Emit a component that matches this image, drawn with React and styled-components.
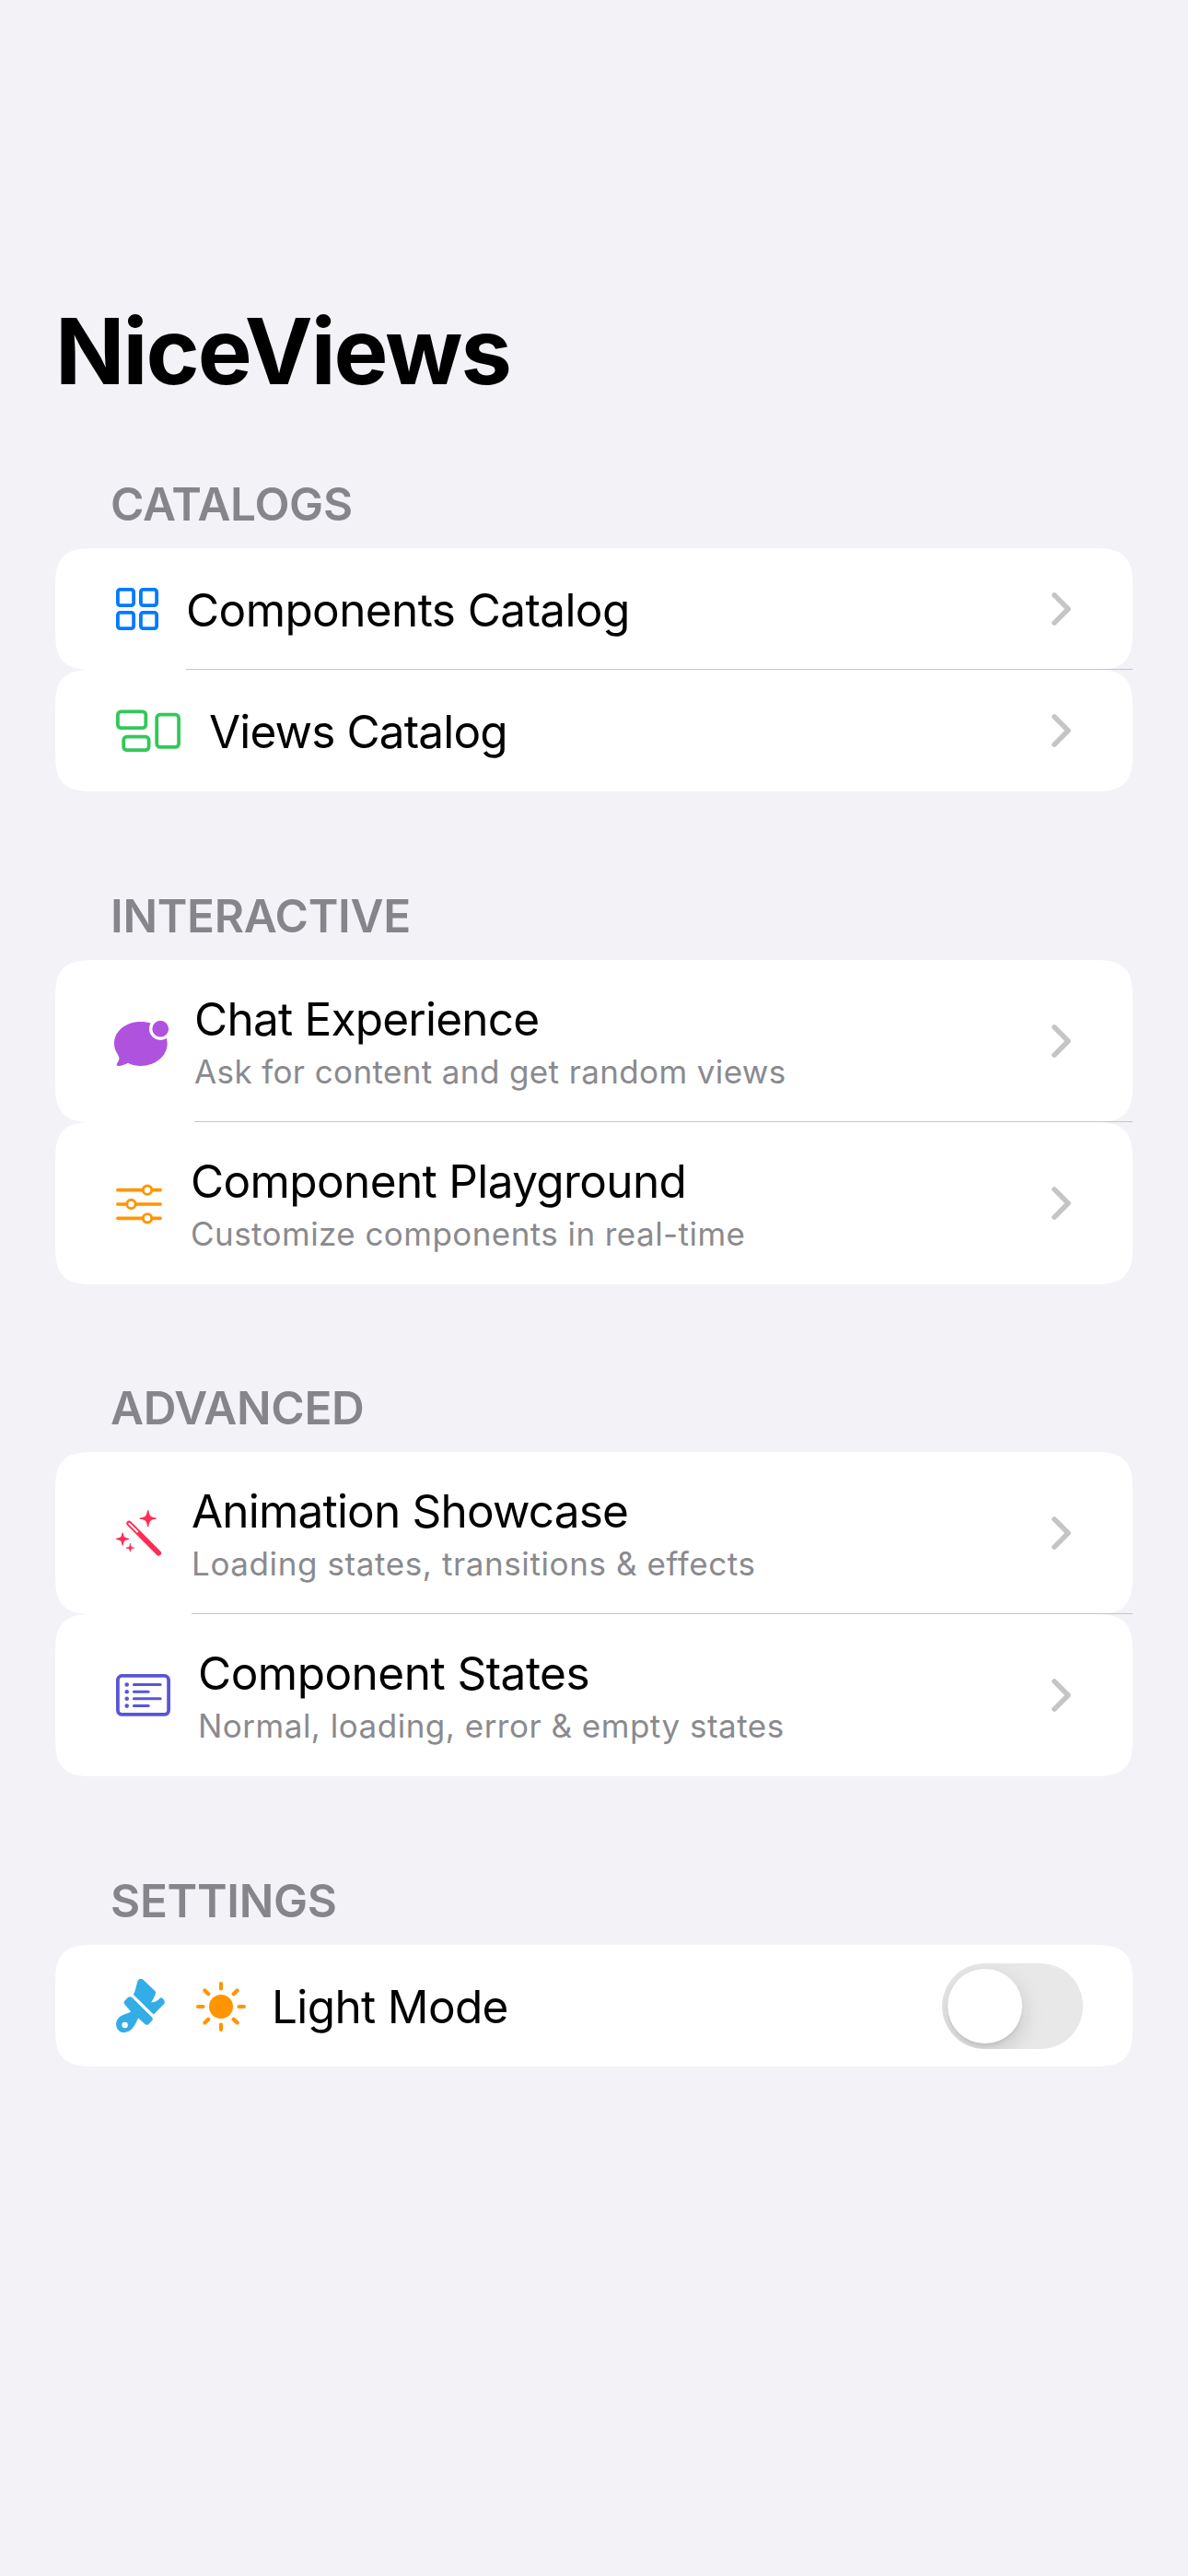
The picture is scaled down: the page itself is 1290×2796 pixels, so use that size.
import React from "react";
import styled, { createGlobalStyle } from "styled-components";

const Global = createGlobalStyle`
  * { box-sizing: border-box; }
  body { margin: 0; background: #f2f2f7; font-family: Inter, "Liberation Sans", sans-serif; }
`;

const Page = styled.main`
  display: flex;
  flex-direction: column;
  width: 1290px;
  min-height: 2796px;
  padding: 322px 60px 0;
  background: #f2f2f7;
`;

const Title = styled.h1`
  margin: 0;
  height: 192px;
  font-size: 99px;
  line-height: 118px;
  font-weight: 700;
  letter-spacing: -1.95px;
  color: #000;
`;

const Section = styled.section`
  display: flex;
  flex-direction: column;
  margin-bottom: ${(p) => p.$after}px;
`;

const Heading = styled.h2`
  margin: 0;
  height: 81px;
  padding: 3px 60px 0;
  font-size: 49.5px;
  line-height: 60px;
  font-weight: 600;
  letter-spacing: -0.3px;
  color: #86858b;
`;

const Row = styled.div`
  position: relative;
  display: flex;
  align-items: center;
  height: ${(p) => p.$height}px;
  padding: 0 54px 0 60px;
  background: #fff;
  border-radius: 32px;
  @supports (corner-shape: superellipse(1.7)) {
    border-radius: 46px;
    corner-shape: superellipse(1.7);
  }
`;

const Divider = styled.div`
  position: absolute;
  left: ${(p) => p.$left}px;
  right: 0;
  bottom: 0;
  height: 1px;
  background: #c5c5c7;
`;

const IconSlot = styled.div`
  flex: none;
  display: flex;
  width: ${(p) => p.$width}px;
  padding-top: ${(p) => p.$drop ?? 0}px;
`;

const Labels = styled.div`
  flex: 1;
  display: flex;
  flex-direction: column;
  padding-top: 2px;
`;

const Label = styled.span`
  font-size: 49.5px;
  line-height: 62px;
  letter-spacing: ${(p) => p.$track}px;
  color: #000;
  white-space: nowrap;
`;

const Detail = styled.span`
  margin-top: 2px;
  font-size: 35px;
  line-height: 48px;
  letter-spacing: ${(p) => p.$track}px;
  color: #8a8a8e;
  white-space: nowrap;
`;

const ChevronBox = styled.div`
  display: flex;
  padding-right: 12px;
`;

const Switch = styled.div`
  display: flex;
  align-items: center;
  width: 153px;
  height: 93px;
  padding: 6px;
  border-radius: 47px;
  background: #e8e8e8;
  overflow: hidden;
`;

const Knob = styled.div`
  width: 81px;
  height: 81px;
  border-radius: 50%;
  background: #fff;
  box-shadow: 0 9px 24px rgba(0, 0, 0, 0.15), 0 3px 3px rgba(0, 0, 0, 0.06);
`;

const Glyph = styled.svg`
  display: block;
  flex: none;
  overflow: visible;
`;

const Chevron = () => (
  <ChevronBox>
    <Glyph width="22" height="36" viewBox="0 0 22 36" fill="none" stroke="#c5c5c7" strokeWidth="5.6" strokeLinecap="round" strokeLinejoin="round">
      <path d="M2.9 2.9 17.9 18 2.9 33.1" />
    </Glyph>
  </ChevronBox>
);

const GridIcon = () => (
  <Glyph width="60" height="46" viewBox="-6 0 60 46" fill="none" stroke="#007aff" strokeWidth="3.8">
    <rect x="1.9" y="1.9" width="17.2" height="17.2" rx="2.6" />
    <rect x="26.9" y="1.9" width="17.2" height="17.2" rx="2.6" />
    <rect x="1.9" y="26.9" width="17.2" height="17.2" rx="2.6" />
    <rect x="26.9" y="26.9" width="17.2" height="17.2" rx="2.6" />
  </Glyph>
);

const GroupIcon = () => (
  <Glyph width="80" height="46" viewBox="-6 0 80 46" fill="none" stroke="#34c759" strokeWidth="3.8">
    <rect x="1.9" y="2.4" width="30.4" height="17.7" rx="3.6" />
    <rect x="8.2" y="29.7" width="27.4" height="14.4" rx="3.6" />
    <rect x="44.2" y="5.7" width="23.9" height="35.2" rx="3.6" />
  </Glyph>
);

const ChatIcon = () => (
  <Glyph width="64" height="50" viewBox="-4 0 64 50">
    <path fill="#af52de" d="M28.8 1C12.6 1 0 11.4 0 24.6c0 5 1.6 8.6 3.8 11.8 1.6 2.4 2 4.4 1.2 6.4-.5 1.4-1.3 2.4-1.9 3.4-.9 1.6-.2 2.9 1.5 2.8 3.6-.2 7-1.2 9.400-2.7.7-.4 1.300-.4 2-.1 3.800 1.800 8.200 2.800 12.800 2.800 16.300 0 28.900-10.800 28.900-24.400C57.700 11.400 45 1 28.800 1Z" />
    <circle cx="50.2" cy="8.7" r="12.2" fill="#fff" />
    <circle cx="50.2" cy="8.7" r="8.9" fill="#af52de" />
  </Glyph>
);

const SlidersIcon = () => (
  <Glyph width="60" height="44" viewBox="-6 0 60 44" fill="#fff" stroke="#ff9500" strokeWidth="3.7" strokeLinecap="round">
    <path d="M1.9 6.7H48.1M1.9 22H48.1M1.9 37.3H48.1" />
    <circle cx="34" cy="6.7" r="4.7" strokeWidth="2.9" />
    <circle cx="16.4" cy="22" r="4.7" strokeWidth="2.9" />
    <circle cx="34" cy="37.3" r="4.7" strokeWidth="2.9" />
  </Glyph>
);

// Four-pointed sparkle centred on (x, y) with concave sides.
const star = (x, y, r) => {
  const k = r * 0.24;
  return `M${x} ${y - r}C${x + k * 0.5} ${y - k} ${x + k} ${y - k * 0.5} ${x + r} ${y}C${x + k} ${y + k * 0.5} ${x + k * 0.5} ${y + k} ${x} ${y + r}C${x - k * 0.5} ${y + k} ${x - k} ${y + k * 0.5} ${x - r} ${y}C${x - k} ${y - k * 0.5} ${x - k * 0.5} ${y - k} ${x} ${y - r}Z`;
};

const WandIcon = () => (
  <Glyph width="60" height="50" viewBox="-6 0 60 50" fill="#ff2d55" stroke="#ff2d55" strokeLinecap="round" strokeLinejoin="round">
    <path d={star(34.7, 9.2, 8.5)} strokeWidth="1.3" />
    <path d={star(7.1, 31.4, 6.4)} strokeWidth="1.2" />
    <path d={star(15.4, 41, 4.1)} strokeWidth="1" />
    <path d="M14.2 14.5 46.2 46.7" strokeWidth="5.8" />
    <path d="M14.3 14.7 23.1 23.5" stroke="#fff" strokeWidth="1.9" />
  </Glyph>
);

const ListIcon = () => (
  <Glyph width="70" height="46" viewBox="-6 0 70 46" fill="none" stroke="#5856d6" strokeLinecap="round">
    <rect x="1.9" y="1.9" width="55.2" height="42" rx="4.6" strokeWidth="3.8" />
    <path strokeWidth="3" d="M19.4 11.5H48.2M19.4 19.2H35.2M19.4 26.7H48.2M19.4 34.6H35.2" />
    <path strokeWidth="4.6" d="M11.7 11.5h.01M11.7 19.2h.01M11.7 26.7h.01M11.7 34.6h.01" />
  </Glyph>
);

const BrushIcon = () => (
  <Glyph width="60" height="60" viewBox="-6 0 60 60" fill="#33ade6">
    <path d="M23.4 3.200C24.300.6 27.600-.1 29.700 2L42.300 14c.9.9 1 1.800.6 2.800-1 3.200-2.300 6.400-4.900 9.700 4.200-.4 7.200-2 9.600-4.600.9-1 2-1 2.900 0l1.400 1.500c1.300 1.500 1.300 3.800-.1 5.200L40.700 39.500 18.900 18C21.200 13.500 22 8 23.400 3.200Z" />
    <path d="M17.500 21.200 38.800 42.300c1.400 1.400 1.400 2.800 0 4.200l-3.400 3.400c-1.200 1.200-2.700 1.200-4 0l-7.200-6.500c-1.600 3.100-2.900 6.300-5.200 9.700-4 6-11.600 8-16 3.800-4.400-4.200-3.800-11.400 1.400-15.200 3.400-2.400 7.600-3 11.800-5.200L9.500 28.700c-1.300-1.600-1.300-2.900 0-4.200l3.200-3.200c1.400-1.400 3.200-1.500 4.800-.1Z" />
    <circle cx="9.600" cy="51" r="3.200" fill="#fff" />
  </Glyph>
);

const SunIcon = () => (
  <Glyph width="54" height="54" viewBox="-27 -27 54 54" stroke="#ff9500" strokeWidth="4.2" strokeLinecap="round">
    <circle r="13" fill="#ff9500" stroke="none" />
    {[0, 45, 90, 135, 180, 225, 270, 315].map((angle) => (
      <path key={angle} d="M0-19.5V-24.9" transform={`rotate(${angle})`} />
    ))}
  </Glyph>
);

const sections = [
  {
    name: "CATALOGS",
    after: 102,
    height: 132,
    rows: [
      { icon: GridIcon, slot: 82, label: "Components Catalog", track: -0.6 },
      { icon: GroupIcon, slot: 107, label: "Views Catalog", track: -0.86 },
    ],
  },
  {
    name: "INTERACTIVE",
    after: 101,
    height: 176,
    rows: [
      { icon: ChatIcon, drop: 6, slot: 91, label: "Chat Experience", track: -0.77, detail: "Ask for content and get random views", detailTrack: 0.38 },
      { icon: SlidersIcon, drop: 2, slot: 87, label: "Component Playground", track: -0.63, detail: "Customize components in real-time", detailTrack: 0.44 },
    ],
  },
  {
    name: "ADVANCED",
    after: 102,
    height: 176,
    rows: [
      { icon: WandIcon, slot: 88, label: "Animation Showcase", track: -0.8, detail: "Loading states, transitions & effects", detailTrack: 0.6 },
      { icon: ListIcon, slot: 95, label: "Component States", track: -0.52, detail: "Normal, loading, error & empty states", detailTrack: 0.5 },
    ],
  },
];

export default function App() {
  return (
    <>
      <Global />
      <Page>
        <Title>NiceViews</Title>
        {sections.map((section) => (
          <Section key={section.name} $after={section.after}>
            <Heading>{section.name}</Heading>
            {section.rows.map(({ icon: Icon, drop, slot, label, track, detail, detailTrack }, i) => (
              <Row key={label} $height={section.height}>
                <IconSlot $width={slot} $drop={drop}>
                  <Icon />
                </IconSlot>
                <Labels>
                  <Label $track={track}>{label}</Label>
                  {detail && <Detail $track={detailTrack}>{detail}</Detail>}
                </Labels>
                <Chevron />
                {i === 0 && <Divider $left={60 + slot} />}
              </Row>
            ))}
          </Section>
        ))}
        <Section $after={0}>
          <Heading>SETTINGS</Heading>
          <Row $height={132}>
            <IconSlot $width={93}>
              <BrushIcon />
            </IconSlot>
            <IconSlot $width={82} $drop={2}>
              <SunIcon />
            </IconSlot>
            <Labels>
              <Label $track={-0.65}>Light Mode</Label>
            </Labels>
            <Switch>
              <Knob />
            </Switch>
          </Row>
        </Section>
      </Page>
    </>
  );
}
